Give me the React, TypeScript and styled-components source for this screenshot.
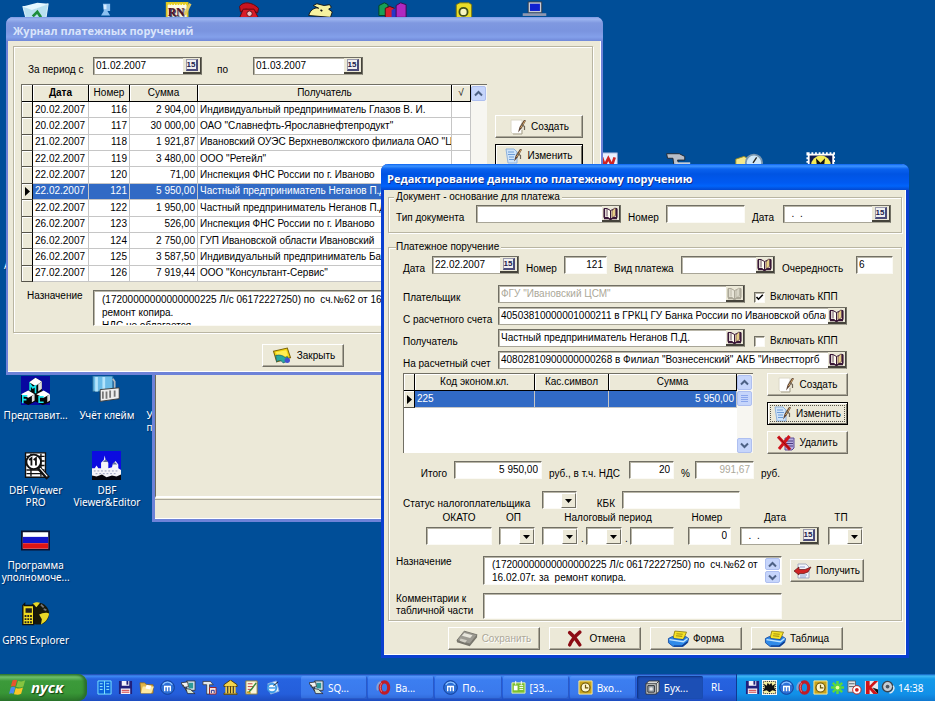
import React from 'react';
import styled, { createGlobalStyle, css } from 'styled-components';

const face = '#ece9d8';
const ui = '"Liberation Sans", Arial, sans-serif';
const shell = '"Noto Sans", "DejaVu Sans", sans-serif';

const GlobalStyle = createGlobalStyle`
  *, *::before, *::after { box-sizing: border-box; }
  html, body, #root { height: 100%; }
  body { margin: 0; overflow: hidden; background: #004e98; font: 10px/12px ${ui}; color: #000; }
  button, input, select, textarea { font: inherit; color: inherit; margin: 0; border-radius: 0; }
`;

/* ---------- desktop ---------- */

const Screen = styled.div`
  height: 100vh;
  display: flex;
  flex-direction: column;
`;

const Desktop = styled.main`
  position: relative;
  flex: 1;
  min-height: 0;
  overflow: hidden;
  background: #004e98;
`;

const IconGrid = styled.div`
  display: grid;
  grid-template-columns: repeat(13, 1fr);
  grid-auto-rows: 75px;
  padding: 1px 8px 0 0;
`;

const Shortcut = styled.a<{ $col: number; $row: number; $start?: boolean }>`
  grid-column: ${p => p.$col};
  grid-row: ${p => p.$row};
  display: flex;
  flex-direction: column;
  align-items: ${p => (p.$start ? 'flex-start' : 'center')};
  padding-left: ${p => (p.$start ? '4px' : '0')};
  text-align: ${p => (p.$start ? 'left' : 'center')};
  gap: 4px;
  font: 10px/12px ${shell};
  color: #fff;
  text-decoration: none;
  text-shadow: 1px 1px 1px #002a60;
  white-space: pre;
  svg { display: block; width: 29px; height: 29px; flex: none; }
`;

/* ---------- windows ---------- */

const WindowA = styled.section`
  position: absolute;
  left: 6px;
  top: 17px;
  width: 597px;
  border: solid #6d82d8;
  border-width: 0 2px 3px;
  border-radius: 7px 7px 0 0;
  background: ${face};
  box-shadow: inset -1px -1px #fff;
`;

const WindowB = styled.section`
  position: absolute;
  left: 381px;
  top: 164px;
  width: 528px;
  border: solid #0a3fd0;
  border-width: 0 3px 3px;
  border-radius: 7px 7px 0 0;
  background: ${face};
  box-shadow: inset -1px -1px #fff;
`;

const WindowC = styled.section`
  position: absolute;
  left: 152px;
  top: 300px;
  width: 300px;
  border: solid #6d82d8;
  border-width: 0 3px 3px;
  background: ${face};
`;

const Pane = styled.div`
  height: 198px;
  border-left: 1px solid #6b6957;
  border-bottom: 2px solid #fff;
`;

const StatusBar = styled.div`
  height: 20px;
  margin-top: 1px;
  border-top: 1px solid #aca899;
  border-bottom: 1px solid #fff;
`;

const TitleBar = styled.header<{ $active?: boolean }>`
  height: ${p => (p.$active ? '26px' : '24px')};
  margin: ${p => (p.$active ? '0 -3px' : '0 -2px')};
  padding: ${p => (p.$active ? '4px 6px 0' : '3px 7px 0')};
  border-radius: 7px 7px 0 0;
  ${p =>
    p.$active
      ? css`
          color: #fff;
          text-shadow: 1px 1px #0f2f8a;
          background: linear-gradient(#0a62f0 0, #3d94ff 2px, #0a62ee 5px, #0054e3 10px, #005af2 19px, #0064fb 22px, #0348cf 26px);
        `
      : css`
          color: #d9e4fb;
          background: linear-gradient(#7c98e4 0, #9db5f0 2px, #7f98e0 6px, #7a94df 14px, #83a0ea 20px, #7088d8 24px);
        `}
`;

const TitleText = styled.h1`
  margin: 0;
  font: bold 11px/21px "Open Sans", "Noto Sans", sans-serif;
  white-space: nowrap;
`;

const BodyA = styled.div`
  padding: 5px 8px 5px 5px;
`;

const BodyB = styled.div`
  padding: 1px 4px 5px;
`;

const frame = css`
  border: 1px solid #b9b5a2;
  box-shadow: inset 1px 1px #fff, 1px 1px #fff;
`;

const Panel = styled.div`
  ${frame}
  padding: 10px 9px 6px 7px;
`;

const Group = styled.fieldset<{ $pad: string }>`
  ${frame}
  margin: 0;
  min-width: 0;
  padding: ${p => p.$pad};
`;

const Legend = styled.legend`
  height: 12px;
  margin-left: 5px;
  padding: 0 2px;
  background: ${face};
`;

const MainGroup = styled(Group)`
  margin-top: 8px;
`;

const MainLegend = styled(Legend)`
  margin-left: 0;
  padding-left: 0;
`;

/* ---------- form parts ---------- */

const Row = styled.div<{ $cols: string; $gap?: number }>`
  display: grid;
  grid-template-columns: ${p => p.$cols};
  align-items: end;
  margin-bottom: ${p => p.$gap ?? 4}px;
`;

const Label = styled.label<{ $end?: boolean; $inset?: boolean }>`
  padding: 0 7px;
  padding-left: ${p => (p.$inset ? '15px' : '7px')};
  line-height: 10px;
  white-space: nowrap;
  text-align: ${p => (p.$end ? 'right' : 'left')};
`;

const sunken = css`
  border: 1px solid;
  border-color: #716f64 #fbfaf5 #fbfaf5 #716f64;
  box-shadow: inset 1px 1px #b9b6a8;
  background: #fff;
`;

const Box = styled.input<{ $right?: boolean }>`
  ${sunken}
  display: block;
  width: 100%;
  min-width: 0;
  height: 18px;
  padding: 0 ${p => (p.$right ? '3px' : '2px')} 2px 2px;
  text-align: ${p => (p.$right ? 'right' : 'left')};
  outline: 0;
  &:disabled { color: #aca899; }
`;

const FieldFrame = styled.span<{ $off?: boolean }>`
  ${sunken}
  border-right-color: #716f64;
  border-bottom-color: #a8a597;
  display: flex;
  height: 18px;
  color: ${p => (p.$off ? '#aca899' : '#000')};
  input {
    flex: 1;
    min-width: 0;
    width: 0;
    padding: 0 0 1px 2px;
    border: 0;
    background: none;
    outline: 0;
  }
`;

const FieldButton = styled.button`
  flex: none;
  display: grid;
  place-items: center;
  width: 18px;
  height: 16px;
  margin-left: 2px;
  padding: 0;
  border: solid;
  border-width: 0 1px 2px 0;
  border-color: #fff #45433b #45433b #fff;
  background: ${face};
`;

const DayMark = styled.span`
  width: 12px;
  height: 12px;
  border: solid;
  border-width: 1px 2px 2px 1px;
  border-color: #9a9aae #4a4a78 #4a4a78 #9a9aae;
  background: #f0f0f0;
  color: #20204a;
  font: bold 8px/9px ${ui};
  text-align: center;
`;

const Combo = styled.span`
  position: relative;
  display: block;
  height: 18px;
  select {
    ${sunken}
    appearance: none;
    width: 100%;
    height: 18px;
    padding: 0 2px;
    outline: 0;
  }
  span {
    position: absolute;
    top: 2px;
    right: 1px;
    display: grid;
    place-items: center;
    width: 15px;
    height: 15px;
    border: 1px solid;
    border-color: #fff #716f64 #716f64 #fff;
    background: ${face};
    pointer-events: none;
  }
`;

const Check = styled.label`
  display: flex;
  align-items: center;
  gap: 5px;
  padding-left: 9px;
  height: 12px;
  white-space: nowrap;
  input {
    appearance: none;
    ${sunken}
    width: 11px;
    height: 11px;
    margin: 0;
  }
  input:checked {
    background: #fff url("data:image/svg+xml,%3Csvg xmlns='http://www.w3.org/2000/svg' viewBox='0 0 9 9'%3E%3Cpath d='M1.5 4 3.5 6.2 7.8 1.8' fill='none' stroke='%23000' stroke-width='1.6'/%3E%3C/svg%3E");
  }
`;

const Memo = styled.textarea<{ $h: number }>`
  ${sunken}
  display: block;
  width: 100%;
  height: ${p => p.$h}px;
  padding: 2px 8px 0;
  line-height: 13px;
  white-space: pre;
  overflow: hidden;
  resize: none;
  outline: 0;
`;

const MemoFrame = styled.div`
  ${sunken}
  display: flex;
  height: 29px;
  padding-right: 1px;
  textarea {
    flex: 1;
    min-width: 0;
    height: 27px;
    padding: 1px 8px 0;
    border: 0;
    box-shadow: none;
    background: none;
  }
`;

const PushButton = styled.button<{ $default?: boolean; $focus?: boolean }>`
  display: flex;
  align-items: center;
  justify-content: center;
  gap: 4px;
  width: 100%;
  height: 23px;
  padding: 0 2px;
  border: 1px solid;
  border-color: #fff #716f64 #716f64 #fff;
  box-shadow: inset -1px -1px #aca899;
  background: ${face};
  white-space: nowrap;
  svg { flex: none; width: 18px; height: 16px; }
  &:disabled { color: #aca899; text-shadow: 1px 1px #fff; }
  ${p =>
    p.$default &&
    css`
      border-color: #000;
      box-shadow: inset 1px 1px #fff, inset -1px -1px #716f64;
    `}
  ${p =>
    p.$focus &&
    css`
      outline: 1px dotted #55534a;
      outline-offset: -4px;
    `}
`;

const SideButtons = styled.div<{ $top: number }>`
  display: flex;
  flex-direction: column;
  gap: 6px;
  padding-top: ${p => p.$top}px;
`;

const ButtonBar = styled.div<{ $w: number; $top: number }>`
  display: flex;
  justify-content: center;
  gap: 9px;
  padding-top: ${p => p.$top}px;
  button { width: ${p => p.$w}px; }
  svg { width: 22px; height: 17px; }
`;

const MainSplit = styled.div`
  display: grid;
  grid-template-columns: 1fr 88px;
  column-gap: 8px;
`;

const PurposeRow = styled.div`
  display: grid;
  grid-template-columns: 66px 1fr;
  padding: 8px 96px 0 6px;
`;

const WideRow = styled.div<{ $gap: number }>`
  display: grid;
  grid-template-columns: 87px 299px 82px;
  margin-bottom: ${p => p.$gap}px;
  label { white-space: pre; }
  > button { margin: 3px 0 0 8px; width: 74px; }
`;

const CodeRow = styled.div`
  display: grid;
  grid-template-columns: 350px 81px;
  column-gap: 14px;
  margin: 0 0 7px 7px;
`;

/* ---------- data grids ---------- */

const GridFrame = styled.div<{ $h: number }>`
  display: flex;
  height: ${p => p.$h}px;
  border-top: 1px solid #716f64;
  border-left: 1px solid #716f64;
  background: #fff;
`;

const Table = styled.table<{ $h: number }>`
  flex: 1;
  min-width: 0;
  width: 0;
  height: ${p => p.$h}px;
  table-layout: fixed;
  border-collapse: separate;
  border-spacing: 0;
  th, td {
    padding: 0 2px;
    overflow: hidden;
    white-space: nowrap;
    font-weight: normal;
    line-height: 12px;
  }
  th {
    height: 17px;
    padding: 0;
    border-right: 1px solid #000;
    border-bottom: 1px solid #000;
    box-shadow: inset 1px 1px #fff;
    background: ${face};
  }
  td {
    border-right: 1px solid #c6c6c6;
    border-bottom: 1px solid #c6c6c6;
    background: #fff;
  }
  td:first-child {
    padding: 0;
    border-color: #000;
    border-bottom-color: #55534a;
    background: ${face};
    box-shadow: inset 1px 1px #fff;
  }
  td svg { display: block; margin: 0 auto; width: 7px; height: 9px; }
  tr[aria-selected='true'] td:not(:first-child) { background: #316ac5; color: #fff; }
`;

const Num = styled.td`
  text-align: right;
`;

const ScrollRail = styled.div`
  display: flex;
  flex-direction: column;
  width: 16px;
  flex: none;
  background: #f7f6f1;
`;

const ScrollButton = styled.button<{ $h?: number; $last?: boolean }>`
  display: grid;
  place-items: center;
  width: 15px;
  height: ${p => p.$h ?? 15}px;
  margin-top: ${p => (p.$last ? 'auto' : '1px')};
  padding: 0;
  border: 1px solid #aebff0;
  border-radius: 2px;
  background: #c6d5fb;
  svg { width: 9px; height: 7px; }
`;

/* ---------- tax block ---------- */

const TaxGrid = styled.div`
  display: grid;
  grid-template-columns: 66px 7px 36px 7px 36px 8px 36px 8px 44px 14px 43px 9px 79px 9px 35px;
  grid-template-rows: 12px 18px;
  row-gap: 3px;
  align-items: end;
  margin: 0 0 11px 30px;
`;

const TaxHead = styled.label<{ $c: string }>`
  grid-row: 1;
  grid-column: ${p => p.$c};
  text-align: center;
  white-space: nowrap;
`;

const TaxCell = styled.div<{ $c: number }>`
  grid-row: 2;
  grid-column: ${p => p.$c};
  padding-left: ${p => (p.$c === 6 || p.$c === 8 ? '3px' : '0')};
`;

/* ---------- taskbar ---------- */

const Taskbar = styled.footer`
  flex: none;
  display: flex;
  height: 27px;
  background: linear-gradient(#1941a5 0, #3f8cf5 2px, #2663e0 5px, #245edb 20px, #1d4cbf 27px);
  font: 10px/26px ${shell};
  color: #fff;
`;

const StartButton = styled.button`
  display: flex;
  align-items: center;
  gap: 4px;
  width: 87px;
  padding: 0 0 1px 9px;
  border: 0;
  border-radius: 0 9px 9px 0;
  background: linear-gradient(#2f7a2f 0, #6fbf6c 3px, #3c9a3a 7px, #389636 19px, #2a7429 27px);
  box-shadow: inset -3px 0 3px #2a6e2c;
  color: #fff;
  font: italic bold 15px/20px "Open Sans", sans-serif;
  text-shadow: 1px 1px 1px #123f12;
  svg { width: 18px; height: 17px; }
`;

const QuickLaunch = styled.nav`
  display: flex;
  align-items: center;
  gap: 6px;
  width: 214px;
  padding-left: 10px;
  a { display: block; height: 15px; }
  svg { display: block; width: 15px; height: 15px; }
`;

const TaskList = styled.div`
  flex: 1;
  min-width: 0;
  display: flex;
  gap: 1px;
  padding: 2px 0 2px;
`;

const Task = styled.button<{ $active?: boolean }>`
  flex: 1 1 0;
  min-width: 0;
  display: flex;
  align-items: center;
  gap: 4px;
  padding: 0 0 0 8px;
  border: 0;
  border-radius: 2px;
  color: #fff;
  white-space: nowrap;
  background: ${p => (p.$active ? '#1c4fb5' : 'linear-gradient(#5a98fa, #3c7ef0 4px, #3a79ec 18px, #3069d8)')};
  box-shadow: ${p => (p.$active ? 'inset 1px 1px 2px #0e307e' : 'inset -1px -1px #2a5ac8')};
  svg { flex: none; width: 15px; height: 15px; }
`;

const Lang = styled.span`
  width: 33px;
  padding-left: 8px;
`;

const Tray = styled.div`
  display: flex;
  align-items: center;
  gap: 2px;
  width: 199px;
  padding: 0 12px 0 8px;
  border-left: 1px solid #0f3a92;
  background: linear-gradient(#0c59b9 0, #3fb8f5 2px, #149ae9 5px, #1290e8 20px, #0f78d0 27px);
  svg { flex: none; width: 15px; height: 15px; }
  time { margin-left: auto; }
`;

/* ---------- icons ---------- */

type Kids = { children: React.ReactNode; w?: number; h?: number };
const Svg = ({ children, w = 16, h = 16 }: Kids) => (
  <svg viewBox={`0 0 ${w} ${h}`} width={w} height={h} aria-hidden="true">{children}</svg>
);

const Book = ({ off }: { off?: boolean }) => {
  const ink = off ? '#aca899' : '#3a1838';
  return (
    <svg width="15" height="13" viewBox="0 0 15 13" aria-hidden="true">
      <path d="M1 1.500h3l3.500 2v9L5 10.500H1z" fill={off ? '#e8e5d8' : '#fffdf0'} stroke={ink} />
      <path d="M14 1.500h-1.500L7.500 3.500v9L9.500 10.500H14z" fill={off ? '#dcd9ca' : '#fff6cf'} stroke={ink} />
      <path d="M9 4 11.500 1h1v7.500L9 11z" fill={off ? '#d8d5c6' : '#e8cf86'} stroke={ink} strokeWidth=".6" />
      <path d="M1 11.500h4.500l2 1.200 2-1.200H14M1.500 2v9M13.500 2v9" fill="none" stroke={ink} strokeWidth="1.300" />
      <path d="M4 2v7.500" stroke={ink} strokeWidth=".8" />
    </svg>
  );
};
const Pen = () => (
  <>
    <path d="M17 1.500 15 1 10.500 8 9 13.500 12.500 9.500z" fill="#5b4130" />
    <path d="M16 2 11.500 9" stroke="#d6a868" strokeWidth="1" />
    <path d="M12 5l3.500 2.500V11" stroke="#6e6558" strokeWidth="1.200" fill="none" />
  </>
);
const NewIcon = () => (
  <Svg w={18}><path d="M2 1h11v14H4l-2-2z" fill="#fff" stroke="#dcd8c8" /><path d="M4 15h9v-4" stroke="#aaa590" fill="none" /><Pen /></Svg>
);
const EditIcon = () => (
  <Svg w={18}><path d="M1 1h8l3 3v11H3z" fill="#cfe4fa" stroke="#8fb2dc" /><path d="M3 4h6M3 6.500h7M4 9h5M4 11.500h5" stroke="#6d9cd6" /><Pen /></Svg>
);
const DeleteIcon = () => (
  <Svg w={18}>
    <path d="M8 3h9v10l-2 2H8z" fill="#b8aee0" stroke="#5c4c94" /><path d="M9 6h7M9 8.500h7M9 11h7" stroke="#4a3a80" />
    <path d="M1 1.500 13 14.500M12.500 1 2 14" stroke="#d0141c" strokeWidth="3" /><path d="M2 2.500 13 14.500" stroke="#7a0a10" strokeWidth=".8" />
  </Svg>
);
const CloseIcon = () => (
  <Svg w={18}>
    <path d="M1 4 14 1l3 9-13 4z" fill="#f3d613" stroke="#7d6407" /><path d="M3 5l10-2 1.500 5L6 10z" fill="#ffee52" />
    <path d="M3 8c4-1 7 0 9 2l2-1 1 4-5 2-1-1.500c-2-1-4-1-5 .5z" fill="#26a8a0" stroke="#17606c" strokeWidth=".7" /><circle cx="14" cy="12.500" r="2.500" fill="#4450d0" />
  </Svg>
);
const SaveIcon = () => (
  <svg viewBox="0 0 24 18" aria-hidden="true">
    <path d="M1 11 9 1l14 4-8 10z" fill="#9d9b93" stroke="#77756c" /><path d="M1 11v2l14 4.500V15zM15 17.500 23 7.500V5l-8 10z" fill="#77756c" />
    <path d="M9 3l9 2.500-2.500 3-9-2.500z" fill="#e8e6dc" /><path d="M5 9l7 2-2 2.500-6-2z" fill="#d0cec4" />
  </svg>
);
const CancelIcon = () => (
  <Svg><path d="M3 2.500C6 5 10 10 12.500 14M12.500 2C9 5 5 9 3 14" stroke="#8c0c14" strokeWidth="3.200" strokeLinecap="round" fill="none" /></Svg>
);
const PrintIcon = () => (
  <svg viewBox="0 0 20 16" aria-hidden="true">
    <path d="M7 1 18 2l-3 7H5z" fill="#f7e326" stroke="#8d7d10" strokeWidth=".8" /><path d="M8.500 3.500l6 .5M8 5.500l6 .5" stroke="#a89410" />
    <path d="M1 8l4-2 1 2 9 1 2-3 3 2-1 4-5 4H6l-5-4z" fill="#2f8ae8" stroke="#1348a0" strokeWidth=".8" />
    <path d="M2 9l13 2 4-3" stroke="#bfe4ff" strokeWidth="1.300" fill="none" /><path d="M6 15h8l5-4" stroke="#0b2f80" fill="none" />
  </svg>
);
const GetIcon = () => (
  <Svg w={18}>
    <path d="M4 1h8l3 3v11H4z" fill="#f4f6fb" stroke="#a4abc0" /><path d="M6 4h5M6 12h7M6 14h6" stroke="#8ca0cc" />
    <path d="M0 8l5-4v2.500h6L17 4l-3 5-4 1.500H5V12z" fill="#d02424" stroke="#5e1414" strokeWidth=".7" />
  </Svg>
);
const Pointer = () => <svg viewBox="0 0 7 9" aria-hidden="true"><path d="M1 0v9l5-4.500z" fill="#000" /></svg>;
const Chevron = ({ down }: { down?: boolean }) => (
  <svg viewBox="0 0 9 7" aria-hidden="true"><path d={down ? 'M1 1.500 4.500 5 8 1.500' : 'M1 5.500 4.500 2 8 5.500'} fill="none" stroke="#4d6185" strokeWidth="2" /></svg>
);
const Grip = () => <svg viewBox="0 0 9 7" aria-hidden="true"><path d="M1 .5h7M1 2.500h7M1 4.500h7M1 6.500h7" stroke="#8ba6ec" /></svg>;
const Drop = () => <svg width="7" height="4" viewBox="0 0 7 4" aria-hidden="true"><path d="M0 0h7L3.500 4z" fill="#000" /></svg>;

const Flag = () => (
  <Svg w={20} h={18}>
    <path d="M4 1c2-1 3-1 5 0L7 8C5 7 4 7 2 8z" fill="#e8542c" /><path d="M10 1.500c3 1 5 1 8-.5l-2 7c-3 1.500-5 1-8 .5z" fill="#86c440" />
    <path d="M2 9c2-1 3-1 5 0l-2 7c-2-1-3-1-5 0z" fill="#4a8cf0" /><path d="M7.500 9.500c3 1 5 1 8-.5l-2 7c-3 1.500-5 1-8 .5z" fill="#fbc628" />
  </Svg>
);
const Floppy = () => (
  <Svg><path d="M1 1h14v14H1z" fill="#20207c" /><path d="M4 1h8v5H4zM3 9h10v6H3z" fill="#f2f2fa" /><path d="M4 11h8M4 13h8" stroke="#d03030" /><path d="M9 1h2v4H9z" fill="#20207c" /></Svg>
);
const Columns = () => (
  <Svg><path d="M1 1h14v14H1z" fill="#0a62dc" stroke="#7fe6ff" /><path d="M8 1v14" stroke="#7fe6ff" /><path d="M3 4h3M3 7h3M3 10h3M10 4h3M10 7h3M10 10h3" stroke="#9ff4ff" /></Svg>
);
const Folder = () => (
  <Svg><path d="M1 3h5l2 2h7v9H2z" fill="#e3b648" stroke="#8d661a" strokeWidth=".8" /><path d="M4 7h12l-3 7H2z" fill="#ffe9a0" /><path d="M8 5l5 1-1 4-5-1z" fill="#fff" /></Svg>
);
const MCircle = () => (
  <Svg><circle cx="8" cy="8" r="7.300" fill="#2c6fd6" stroke="#123c94" /><path d="M3 5a6 6 0 0 1 10 0" stroke="#8cc2ff" strokeWidth="1.500" fill="none" /><path d="M5 12V7h6v5M8 7v5" stroke="#fff" strokeWidth="1.500" fill="none" /></Svg>
);
const Wizard = () => (
  <Svg><path d="M6 1h9v10H6z" fill="#d8e4ee" stroke="#30404c" /><path d="M8 3h5v6H8z" fill="#2c9a9a" /><path d="M0 3l7-1 1 5-5 1z" fill="#f2f2f2" stroke="#222" strokeWidth=".8" /><path d="M5 9l5 1 5 4.500H7z" fill="#d6e6d2" stroke="#223" strokeWidth=".8" /><path d="M2 5l4 7" stroke="#333" /></Svg>
);
const Hammer = () => (
  <Svg><path d="M1 1.500h8l3 3.500H8v10H5V5H1z" fill="#e4e8ea" stroke="#333" strokeWidth=".8" /><path d="M8 8h7v7H8z" fill="#f8e4e0" stroke="#a02020" /><path d="M10 14v-3h3v3" stroke="#1c2c90" fill="none" /></Svg>
);
const Bank = () => (
  <Svg><path d="M8 0l7 5v2H1V5z" fill="#f4d44c" stroke="#4e3b06" /><path d="M1 14h14v1.500H1z" fill="#f4d44c" stroke="#4e3b06" strokeWidth=".8" /><path d="M3.500 7v7M6.500 7v7M9.500 7v7M12.500 7v7" stroke="#f0cc44" strokeWidth="2" /><path d="M5 7v7M8 7v7M11 7v7" stroke="#4e3b06" /></Svg>
);
const Note = () => (
  <Svg><path d="M2 1h12v14H2z" fill="#fbf6da" stroke="#8d7d3a" /><path d="M4 4h5M4 7h6M4 10h4" stroke="#c04040" /><path d="M13 3 8 10l-3 3" stroke="#3c8c3c" strokeWidth="1.600" /><path d="M3 13l4 1" stroke="#d0a020" strokeWidth="2" /></Svg>
);
const Explorer = () => (
  <Svg><path d="M3 4l9-3 3 11-9 3z" fill="#e8f4ff" stroke="#86aede" /><circle cx="7.500" cy="8.500" r="4.500" fill="#f4faff" stroke="#3d9ae6" strokeWidth="2" /><path d="M4 8.500h7" stroke="#3d9ae6" strokeWidth="1.500" /><path d="M9 6l5-4" stroke="#222" /></Svg>
);
const Opera = () => (
  <Svg><ellipse cx="9" cy="8" rx="4.500" ry="6" fill="none" stroke="#c01c28" strokeWidth="3.400" /><path d="M2 11a7 7 0 0 1 3-9" stroke="#8aa0d0" strokeWidth="2" fill="none" /><path d="M6 3.500c-2 3-2 6 0 9" stroke="#f08080" fill="none" /></Svg>
);
const Card = () => (
  <Svg><path d="M1 3h14v11H1z" fill="#7cc030" stroke="#e4f4b8" /><path d="M3 6h4v5H3z" fill="#fff" /><path d="M9 6h4M9 8h4M9 10h4" stroke="#fff" /><path d="M5 1v4M11 1v4" stroke="#fff" /></Svg>
);
const Outlook = () => (
  <Svg><path d="M1 1h14v14H1z" fill="#c8a41c" stroke="#fff0a0" /><circle cx="8" cy="8" r="4.800" fill="#fff6cc" stroke="#6b5508" strokeWidth="1.300" /><path d="M8 5v3.500h3" stroke="#6b5508" strokeWidth="1.300" fill="none" /></Svg>
);
const Safe = () => (
  <Svg><path d="M1 4l3-3h11v11l-3 3H1z" fill="#d7d8d6" stroke="#33383e" /><path d="M1 4h11v11M12 4l3-3" stroke="#33383e" fill="none" /><path d="M3 6h7v7H3z" fill="#9da6ae" stroke="#22282e" /><circle cx="6.500" cy="9.500" r="1.800" fill="#e8e8e8" /></Svg>
);
const Bat = () => (
  <Svg><path d="M0 0h16v16H0z" fill="#fff" /><path d="M1.500 1.500h13v13h-13z" fill="#f6efa0" stroke="#111" strokeDasharray="1 1" /><path d="M2 4l3 2 1-3 2 2 2-2 1 3 3-2-1 4 2 4-4-1-3 2-3-2-4 1 2-4z" fill="#111" /></Svg>
);
const Flower = () => (
  <Svg><path d="M8 1v14M1 8h14M3 3l10 10M13 3 3 13" stroke="#5cd83c" strokeWidth="2.600" /><circle cx="8" cy="8" r="2" fill="#e8ff9c" /></Svg>
);
const Server = () => (
  <Svg><path d="M1 1h8v12H1z" fill="#e4e6e8" stroke="#55606a" /><path d="M2 4h6M2 7h6" stroke="#55606a" /><circle cx="10.500" cy="10.500" r="4.500" fill="#fff" stroke="#c02020" /><circle cx="10.500" cy="10.500" r="2" fill="#d01c1c" /></Svg>
);
const Kasper = () => (
  <Svg><path d="M1 1h14v14H1z" fill="#e8e8ee" /><path d="M2 1h4v5l5-5h4L8 8l7 7h-5L6 10v5H2z" fill="#d01418" /><path d="M9 8l6 2v5z" fill="#111" /></Svg>
);
const Speaker = () => (
  <Svg><circle cx="7" cy="7" r="5.500" fill="#c7cdd4" stroke="#3c454e" strokeWidth="1.500" /><circle cx="7" cy="7" r="2" fill="#4b5560" /><path d="M13 6c2 3 0 7-4 8" stroke="#dfe8f0" fill="none" strokeWidth="1.500" /></Svg>
);

/* desktop drawings, on a 32-unit square */
const D = ({ children }: { children: React.ReactNode }) => <Svg w={32} h={32}>{children}</Svg>;
const Bin = () => <D><path d="M2 6l14 2 14-5-4 26H8z" fill="#b8e0f0" stroke="#e8f8ff" /><path d="M2 6l10 4 18-7-12-1z" fill="#e6f8ff" /><path d="M13 17l5-5 4 6" stroke="#1d8c3c" strokeWidth="3" fill="none" /></D>;
const Figure = () => <D><path d="M12 3h8v8h-3l3 5H10l3-5z" fill="#8cc0f0" /><path d="M13 4h3v5h-3z" fill="#d8ecff" /></D>;
const Rn = () => (
  <D><path d="M3 2h23v27H3z" fill="#fffbe0" stroke="#d8c020" strokeWidth="2" /><path d="M3 3h23" stroke="#e8d020" strokeWidth="3" strokeDasharray="2 1" />
    <text x="4" y="17" fontFamily="Liberation Serif, serif" fontWeight="bold" fontSize="13" fill="#5a1020">RN</text><path d="M29 3l-6 12" stroke="#e0c860" strokeWidth="3" /></D>
);
const Phone = () => <D><path d="M5 6c4-6 14-5 21 2l-1 5-7-3-6-1-6 3z" fill="#c81420" stroke="#5e060c" /><path d="M9 9h12l6 12H4z" fill="#d81c28" stroke="#5e060c" /><circle cx="16" cy="14" r="3" fill="#f0c0c0" stroke="#5e060c" /></D>;
const Rabbit = () => <D><path d="M3 16C5 8 12 7 14 8L8 5l4-2 8 2 6-1 2 3-3 2 4 3-2 6z" fill="#f6f2a0" stroke="#111" /><path d="M16 10l2 1" stroke="#111" strokeWidth="2" /></D>;
const Cubes = () => (
  <D><path d="M1 5l6-3 4 2v12H1z" fill="#18a058" stroke="#04401c" /><path d="M8 8l5-2 5 2v12H8z" fill="#d82030" stroke="#500810" /><path d="M15 10l4-2 4 2v9h-8z" fill="#2838c8" /><path d="M20 5l5-3 6 2v14H20z" fill="#b028c0" stroke="#400848" /></D>
);
const Cam = () => <D><path d="M8 4l4-2h10l3 2v16H8z" fill="#e8dc28" stroke="#7c7408" /><circle cx="16" cy="12" r="4.500" fill="#f6f4c0" stroke="#405018" strokeWidth="2" /></D>;
const Monitor = () => <D><path d="M9 1h15v12H9z" fill="#c8ccd8" stroke="#303848" /><path d="M11 3h11v8H11z" fill="#1020d0" /><path d="M3 15h26" stroke="#9098b0" strokeWidth="3" /></D>;
const Word = () => <D><path d="M8 2h20v24H8z" fill="#e8f0ff" stroke="#8098c8" /><path d="M11 7l3 9 4-8 4 8 3-9" stroke="#d02424" strokeWidth="3" fill="none" /></D>;
const Faucet = () => <D><path d="M4 3h14l6 3v4h-8l2 6h-6L11 8H5z" fill="#b8bec8" stroke="#20242c" /><path d="M14 14h16" stroke="#c8d0d8" strokeWidth="3" /></D>;
const Gauge = () => <D><path d="M2 9l9-3 6 3v14H2z" fill="#f4e88c" stroke="#a09020" /><circle cx="22" cy="13" r="9" fill="#cfe8f8" stroke="#7c98b0" strokeWidth="2" /><path d="M21 13l4-6" stroke="#222" strokeWidth="1.500" /></D>;
const Stamp = () => <D><path d="M2 3h29v26H2z" fill="#fff" stroke="#fff" strokeDasharray="2 2" strokeWidth="3" /><path d="M4 5h25v22H4z" fill="#101c50" /><circle cx="16.500" cy="16" r="11" fill="#f4ec58" /><path d="M11 8l5 5 5-5-1 8-4 4-4-4z" fill="#111" /></D>;
const Mfc = () => (
  <D><path d="M0 0h32v32H0z" fill="#0808a0" />
    <path d="M9 7l7-5 7 4v10l9 5v8l-8 3-8-4-8 4-8-4v-7l9-5z" fill="#050505" />
    <path d="M9 7l7-5 7 4-7 5zM0 20l8-4 7 4-7 4zM17 20l8-4 7 4-7 4z" fill="#fff" /><path d="M19 9l4-3v8l-4 3zM12 22l3-2v7l-3 2zM29 22l3-2v7l-3 2z" fill="#dcdcdc" />
    <path d="M10 16V9l3 4 3-2v8M2 30v-8h5M2 26h4M25 23h-5v6h5" stroke="#18e8f0" strokeWidth="1.800" fill="none" /></D>
);
const Press = () => (
  <D><path d="M1 0h22v17H1z" fill="#6cbce8" stroke="#2c6c98" /><path d="M5 1v16M13 1v16" stroke="#b4e4fc" strokeWidth="3" /><path d="M23 3l2 3v9" stroke="#b0b8c0" strokeWidth="2" fill="none" />
    <path d="M9 15l21-2v12L9 28z" fill="#eee" stroke="#333" /><path d="M12 17v8M16 17v8M20 16v8M25 16v7" stroke="#777" strokeWidth="2" /></D>
);
const Lens = () => (
  <D><path d="M5 2h22v27H5z" fill="#fff" stroke="#111" strokeWidth="1.500" /><path d="M6 6h20M6 11h20M6 16h20M6 21h20M6 25h20M11 3v25M22 3v25" stroke="#111" strokeWidth="1.500" /><circle cx="14" cy="12" r="8" fill="#fff" stroke="#111" strokeWidth="2" />
    <path d="M19 18l11 12" stroke="#111" strokeWidth="5" /><path d="M21 19l8 9" stroke="#fff" strokeWidth="1.300" /><path d="M9 10l2.500-2v8M14 10l2.500-2v8" stroke="#111" strokeWidth="2" fill="none" /></D>
);
const Palace = () => (
  <D><path d="M0 0h32v32H0z" fill="#0c0ce0" /><path d="M0 32V19h3l2-3 2 3h3v-6l3-3 1-5 1 5 3 3v6l4-1 1-4 3-3 3 4v4l3 2v11z" fill="#f4f4f8" /><path d="M12 12l3-3 3 3M22 15l3-3 3 3" fill="#5c6c9c" /><path d="M2 22h28M4 25h24" stroke="#9098b8" strokeDasharray="2 2" />
    <path d="M0 32v-5l5 1 6-2 5 3 6-2 5 1 5-2v6z" fill="#05050a" /></D>
);
const RuFlag = () => <D><path d="M1 6h30v20H1z" fill="#fff" stroke="#0a1030" strokeWidth="2" /><path d="M2 12h28v7H2z" fill="#1414c8" /><path d="M2 19h28v6H2z" fill="#e01414" /></D>;
const Gprs = () => (
  <D><circle cx="19" cy="14" r="12" fill="#181808" /><path d="M13 3c3-2 6-2 8-1l-4 5zM20 15c3-2 9-3 11-1-1 6-4 9-9 12l1-6z" fill="#e8d828" /><path d="M22 4l3 3M25 9l3 1" stroke="#777" strokeWidth="2" />
    <path d="M2 5l2-2v2h10v21H2z" fill="#f0dc20" stroke="#111" strokeWidth="1.500" /><path d="M5 8h7v5H5z" fill="#222" /><path d="M4 16.500h9M4 20h9M4 23.500h9" stroke="#222" strokeWidth="2.200" strokeDasharray="2 1" /></D>
);

/* ---------- composed controls ---------- */

type FieldProps = { id?: string; value?: string; off?: boolean; label: string };

const DateField = ({ id, value = '', label }: FieldProps) => (
  <FieldFrame>
    <input id={id} defaultValue={value} aria-label={id ? undefined : label} />
    <FieldButton aria-label="Календарь"><DayMark>15</DayMark></FieldButton>
  </FieldFrame>
);
const LookupField = ({ id, value = '', off, label }: FieldProps) => (
  <FieldFrame $off={off}>
    <input id={id} defaultValue={value} disabled={off} aria-label={id ? undefined : label} />
    <FieldButton aria-label="Справочник" disabled={off}><Book off={off} /></FieldButton>
  </FieldFrame>
);
const ComboField = ({ id, label }: FieldProps) => (
  <Combo><select id={id} aria-label={id ? undefined : label}><option /></select><span><Drop /></span></Combo>
);

/* ---------- data ---------- */

const payments: [string, string, string, string][] = [
  ['20.02.2007', '116', '2 904,00', 'Индивидуальный предприниматель Глазов В. И.'],
  ['20.02.2007', '117', '30 000,00', 'ОАО "Славнефть-Ярославнефтепродукт"'],
  ['21.02.2007', '118', '1 921,87', 'Ивановский ОУЭС Верхневолжского филиала ОАО "Ц'],
  ['22.02.2007', '119', '3 480,00', 'ООО "Ретейл"'],
  ['22.02.2007', '120', '71,00', 'Инспекция ФНС России по г. Иваново'],
  ['22.02.2007', '121', '5 950,00', 'Частный предприниматель Неганов П.Д.'],
  ['22.02.2007', '122', '1 950,00', 'Частный предприниматель Неганов П.Д.'],
  ['26.02.2007', '123', '526,00', 'Инспекция ФНС России по г. Иваново'],
  ['26.02.2007', '124', '2 750,00', 'ГУП Ивановской области Ивановский'],
  ['26.02.2007', '125', '3 587,50', 'Индивидуальный предприниматель Ба'],
  ['27.02.2007', '126', '7 919,44', 'ООО "Консультант-Сервис"'],
];

const shortcuts: { c: number; r: number; icon?: React.ReactNode; text?: string; start?: boolean }[] = [
  { c: 1, r: 1, icon: <Bin /> }, { c: 2, r: 1, icon: <Figure /> }, { c: 3, r: 1, icon: <Rn /> }, { c: 4, r: 1, icon: <Phone /> },
  { c: 5, r: 1, icon: <Rabbit /> }, { c: 6, r: 1, icon: <Cubes /> }, { c: 7, r: 1, icon: <Cam /> }, { c: 8, r: 1, icon: <Monitor /> },
  { c: 9, r: 3, icon: <Word /> }, { c: 10, r: 3, icon: <Faucet /> }, { c: 11, r: 3, icon: <Gauge /> }, { c: 12, r: 3, icon: <Stamp /> },
  { c: 1, r: 6, icon: <Mfc />, text: 'Представит...' }, { c: 2, r: 6, icon: <Press />, text: 'Учёт клейм' },
  { c: 3, r: 6, icon: <D>{null}</D>, text: 'У\nп', start: true },
  { c: 1, r: 7, icon: <Lens />, text: 'DBF Viewer\nPRO' }, { c: 2, r: 7, icon: <Palace />, text: 'DBF\nViewer&Editor' },
  { c: 1, r: 8, icon: <RuFlag />, text: 'Программа\nуполномоче...' },
  { c: 1, r: 9, icon: <Gprs />, text: 'GPRS Explorer' },
  { c: 1, r: 4, icon: <D>{null}</D>, text: 'А', start: true },
];

const quick: [string, React.ReactNode][] = [
  ['Панели', <Columns />], ['Дискета', <Floppy />], ['Папка', <Folder />], ['Почта', <MCircle />], ['SQL', <Wizard />],
  ['Сервис', <Hammer />], ['Банк', <Bank />], ['Заметки', <Note />], ['Интернет', <Explorer />],
];

const tasks: [string, React.ReactNode][] = [
  ['SQ...', <Wizard />], ['Ва...', <Opera />], ['По...', <MCircle />], ['[33...', <Card />], ['Вхо...', <Outlook />], ['Бух...', <Safe />],
];

/* ---------- windows content ---------- */

const Journal = () => (
  <WindowA>
    <TitleBar><TitleText>Журнал платежных поручений</TitleText></TitleBar>
    <BodyA>
      <Panel>
        <Row $cols="72px 109px 51px 110px" $gap={9}>
          <Label htmlFor="from">За период с</Label>
          <DateField id="from" value="01.02.2007" label="С" />
          <Label htmlFor="to" $inset>по</Label>
          <DateField id="to" value="01.03.2007" label="По" />
        </Row>
        <MainSplit>
          <GridFrame $h={198}>
            <Table $h={197}>
              <colgroup><col width="11" /><col width="56" /><col width="41" /><col width="68" /><col /><col width="19" /></colgroup>
              <thead><tr><th /><th scope="col"><b>Дата</b></th><th scope="col">Номер</th><th scope="col">Сумма</th><th scope="col">Получатель</th><th scope="col">√</th></tr></thead>
              <tbody>
                {payments.map(([date, no, sum, who]) => (
                  <tr key={no} aria-selected={no === '121'}>
                    <td>{no === '121' && <Pointer />}</td><td>{date}</td><Num>{no}</Num><Num>{sum}</Num><td>{who}</td><td />
                  </tr>
                ))}
              </tbody>
            </Table>
            <ScrollRail><ScrollButton aria-label="Вверх"><Chevron /></ScrollButton></ScrollRail>
          </GridFrame>
          <SideButtons $top={31}>
            <PushButton><NewIcon />Создать</PushButton>
            <PushButton $default><EditIcon />Изменить</PushButton>
          </SideButtons>
        </MainSplit>
        <PurposeRow>
          <label htmlFor="jmemo">Назначение</label>
          <Memo id="jmemo" $h={36} defaultValue={'(17200000000000000225 Л/с 06172227250) по  сч.№62 от 16.02.07г. за\nремонт копира.\nНДС не облагается.'} />
        </PurposeRow>
      </Panel>
      <ButtonBar $w={82} $top={11}><PushButton><CloseIcon />Закрыть</PushButton></ButtonBar>
    </BodyA>
  </WindowA>
);

const Editor = () => (
  <WindowB>
    <TitleBar $active><TitleText>Редактирование данных по платежному поручению</TitleText></TitleBar>
    <BodyB>
      <Group $pad="2px 10px 9px 0">
        <Legend>Документ - основание для платежа</Legend>
        <Row $cols="87px 145px 45px 79px 38px 1fr" $gap={0}>
          <Label htmlFor="dtype">Тип документа</Label><LookupField id="dtype" label="Тип" />
          <Label htmlFor="dno">Номер</Label><Box id="dno" />
          <Label htmlFor="ddate">Дата</Label><DateField id="ddate" value="  .  ." label="Дата" />
        </Row>
      </Group>
      <MainGroup $pad="3px 8px 1px 7px">
        <MainLegend>Платежное поручение</MainLegend>
        <Row $cols="36px 87px 45px 43px 74px 94px 81px 1fr" $gap={11}>
          <Label htmlFor="pdate">Дата</Label><DateField id="pdate" value="22.02.2007" label="Дата" />
          <Label htmlFor="pno">Номер</Label><Box id="pno" $right defaultValue="121" />
          <Label htmlFor="pkind">Вид платежа</Label><LookupField id="pkind" label="Вид" />
          <Label htmlFor="order">Очередность</Label><Box id="order" defaultValue="6" />
        </Row>
        <Row $cols="102px 247px 1fr">
          <Label htmlFor="payer">Плательщик</Label><LookupField id="payer" off value={'ФГУ "Ивановский ЦСМ"'} label="Плательщик" />
          <Check><input type="checkbox" defaultChecked />Включать КПП</Check>
        </Row>
        <Row $cols="102px 349px">
          <Label htmlFor="acc1">С расчетного счета</Label><LookupField id="acc1" value="40503810000001000211 в ГРКЦ ГУ Банка России по Ивановской области" label="Счет" />
        </Row>
        <Row $cols="102px 247px 1fr">
          <Label htmlFor="payee">Получатель</Label><LookupField id="payee" value="Частный предприниматель Неганов П.Д." label="Получатель" />
          <Check><input type="checkbox" />Включать КПП</Check>
        </Row>
        <Row $cols="102px 349px">
          <Label htmlFor="acc2">На расчетный счет</Label><LookupField id="acc2" value={'40802810900000000268 в Филиал "Вознесенский" АКБ "Инвестторгб'} label="Счет" />
        </Row>
        <CodeRow>
          <GridFrame $h={80}>
            <Table $h={34}>
              <colgroup><col width="11" /><col width="120" /><col width="74" /><col /></colgroup>
              <thead><tr><th /><th scope="col">Код эконом.кл.</th><th scope="col">Кас.символ</th><th scope="col">Сумма</th></tr></thead>
              <tbody><tr aria-selected="true"><td><Pointer /></td><td>225</td><td /><Num>5 950,00</Num></tr></tbody>
            </Table>
            <ScrollRail>
              <ScrollButton aria-label="Вверх"><Chevron /></ScrollButton>
              <ScrollButton aria-label="Ползунок"><Grip /></ScrollButton>
              <ScrollButton aria-label="Вниз" $last><Chevron down /></ScrollButton>
            </ScrollRail>
          </GridFrame>
          <SideButtons $top={0}>
            <PushButton><NewIcon />Создать</PushButton>
            <PushButton $default $focus><EditIcon />Изменить</PushButton>
            <PushButton><DeleteIcon />Удалить</PushButton>
          </SideButtons>
        </CodeRow>
        <Row $cols="58px 88px 87px 45px 21px 59px 1fr" $gap={12}>
          <Label htmlFor="total" $end>Итого</Label><Box id="total" $right defaultValue="5 950,00" />
          <Label htmlFor="vat">руб., в т.ч. НДС</Label><Box id="vat" $right defaultValue="20" />
          <Label htmlFor="vatsum">%</Label><Box id="vatsum" $right disabled defaultValue="991,67" />
          <Label as="span">руб.</Label>
        </Row>
        <Row $cols="146px 35px 45px 118px" $gap={3}>
          <Label htmlFor="status">Статус налогоплательщика</Label><ComboField id="status" label="Статус" />
          <Label htmlFor="kbk" $end>КБК</Label><Box id="kbk" />
        </Row>
        <TaxGrid>
          <TaxHead htmlFor="okato" $c="1">ОКАТО</TaxHead>
          <TaxHead htmlFor="op" $c="2 / 4">ОП</TaxHead>
          <TaxHead htmlFor="period" $c="5 / 10">Налоговый период</TaxHead>
          <TaxHead htmlFor="tno" $c="10 / 13">Номер</TaxHead>
          <TaxHead htmlFor="tdate" $c="12 / 14">Дата</TaxHead>
          <TaxHead htmlFor="tp" $c="14 / 16">ТП</TaxHead>
          <TaxCell $c={1}><Box id="okato" /></TaxCell>
          <TaxCell $c={3}><ComboField id="op" label="ОП" /></TaxCell>
          <TaxCell $c={5}><ComboField id="period" label="Период" /></TaxCell>
          <TaxCell $c={6}>.</TaxCell>
          <TaxCell $c={7}><ComboField label="Месяц" /></TaxCell>
          <TaxCell $c={8}>.</TaxCell>
          <TaxCell $c={9}><Box aria-label="Год" /></TaxCell>
          <TaxCell $c={11}><Box id="tno" $right defaultValue="0" /></TaxCell>
          <TaxCell $c={13}><DateField id="tdate" value="  .  ." label="Дата" /></TaxCell>
          <TaxCell $c={15}><ComboField id="tp" label="ТП" /></TaxCell>
        </TaxGrid>
        <WideRow $gap={8}>
          <label htmlFor="purpose">Назначение</label>
          <MemoFrame>
            <Memo id="purpose" $h={27} defaultValue={'(17200000000000000225 Л/с 06172227250) по  сч.№62 от\n16.02.07г. за  ремонт копира.'} />
            <div><ScrollButton $h={12} aria-label="Вверх"><Chevron /></ScrollButton><ScrollButton $h={12} aria-label="Вниз"><Chevron down /></ScrollButton></div>
          </MemoFrame>
          <PushButton><GetIcon />Получить</PushButton>
        </WideRow>
        <WideRow $gap={0}>
          <label htmlFor="comment">{'Комментарии к\nтабличной части'}</label>
          <Memo id="comment" $h={26} />
        </WideRow>
      </MainGroup>
      <ButtonBar $w={92} $top={6}>
        <PushButton disabled><SaveIcon />Сохранить</PushButton>
        <PushButton><CancelIcon />Отмена</PushButton>
        <PushButton><PrintIcon />Форма</PushButton>
        <PushButton><PrintIcon />Таблица</PushButton>
      </ButtonBar>
    </BodyB>
  </WindowB>
);

export default function App() {
  return (
    <Screen>
      <GlobalStyle />
      <Desktop>
        <IconGrid>
          {shortcuts.map(s => (
            <Shortcut key={`${s.c}-${s.r}`} href="#" $col={s.c} $row={s.r} $start={s.start}>{s.icon}{s.text}</Shortcut>
          ))}
        </IconGrid>
        <WindowC><Pane /><StatusBar /></WindowC>
        <Journal />
        <Editor />
      </Desktop>
      <Taskbar>
        <StartButton><Flag />пуск</StartButton>
        <QuickLaunch>{quick.map(([name, icon]) => <a key={name} href="#" aria-label={name}>{icon}</a>)}</QuickLaunch>
        <TaskList>{tasks.map(([name, icon], i) => <Task key={name} $active={i === 5}>{icon}{name}</Task>)}</TaskList>
        <Lang>RL</Lang>
        <Tray><Floppy /><Bat /><MCircle /><Opera /><Outlook /><Flower /><Server /><Kasper /><Speaker /><time>14:38</time></Tray>
      </Taskbar>
    </Screen>
  );
}
